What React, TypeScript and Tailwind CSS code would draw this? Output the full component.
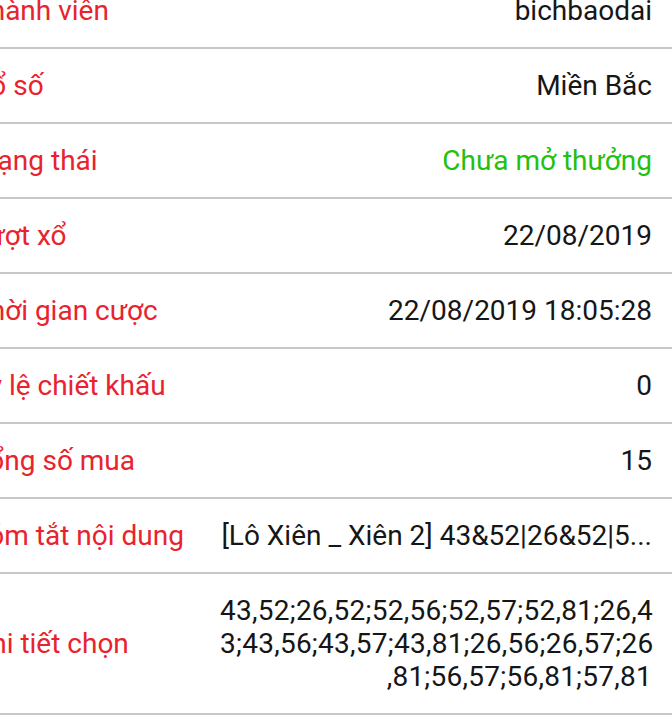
import React from 'react';

type Row = {
  label: string;
  value: React.ReactNode;
  valueClass?: string;
  tall?: boolean;
};

const rows: Row[] = [
  { label: 'Thành viên', value: 'bichbaodai' },
  { label: 'Xổ số', value: 'Miền Bắc' },
  { label: 'Trạng thái', value: 'Chưa mở thưởng', valueClass: 'text-[#22c10f]' },
  { label: 'Lượt xổ', value: '22/08/2019' },
  { label: 'Thời gian cược', value: '22/08/2019 18:05:28' },
  { label: 'Tỷ lệ chiết khấu', value: '0' },
  { label: 'Tổng số mua', value: '15' },
  { label: 'Tóm tắt nội dung', value: '[Lô Xiên _ Xiên 2] 43&52|26&52|5...' },
  {
    label: 'Chi tiết chọn',
    tall: true,
    value: (
      <>
        <span className="block">43,52;26,52;52,56;52,57;52,81;26,4</span>
        <span className="block">3;43,56;43,57;43,81;26,56;26,57;26</span>
        <span className="block">,81;56,57;56,81;57,81</span>
      </>
    ),
  },
];

const App: React.FC = () => {
  return (
    <div className="w-[672px] h-[723px] overflow-hidden bg-white font-['Roboto',sans-serif] text-[28px]">
      <div className="mt-[-26px] ml-[-27px]">
        {rows.map((row) => (
          <div
            key={row.label}
            className={`flex items-center border-b-2 border-[#c8c8cc] pr-5 ${row.tall ? 'h-[141px]' : 'h-[75px]'}`}
          >
            <div className="w-[247px] shrink-0 whitespace-nowrap text-[#e8232d]">{row.label}</div>
            <div
              className={`flex-1 min-w-0 text-right whitespace-nowrap ${row.tall ? 'leading-[33px] tracking-[0.25px]' : ''} ${row.valueClass ?? 'text-[#161616]'}`}
            >
              {row.value}
            </div>
          </div>
        ))}
      </div>
    </div>
  );
};

export default App;
